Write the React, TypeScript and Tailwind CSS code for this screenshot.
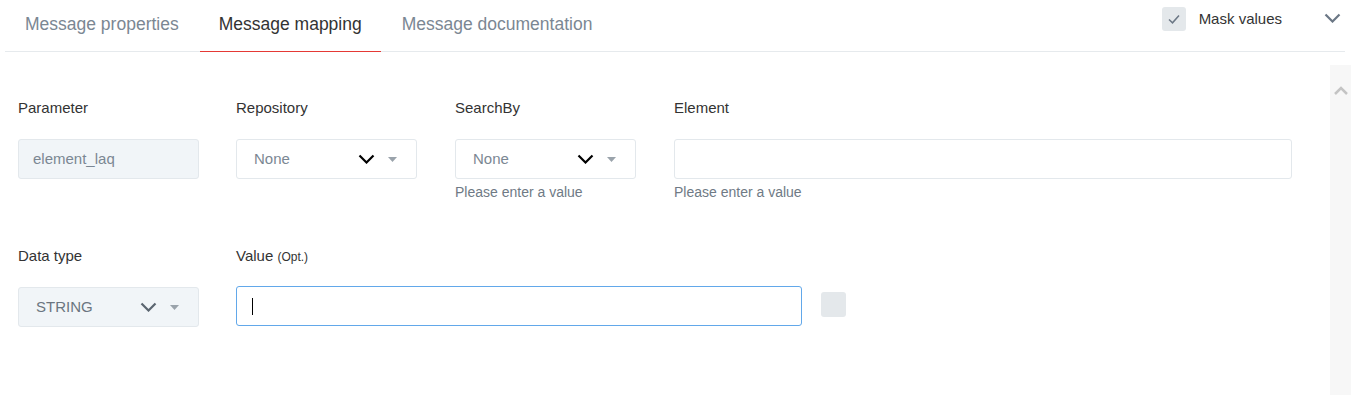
import React from 'react'

const tabs = ['Message properties', 'Message mapping', 'Message documentation']

function Caret() {
  return (
    <svg width="9" height="5" viewBox="0 0 9 5" className="text-[#9aa3ab]">
      <path d="M0 0h9L4.5 5z" fill="currentColor" />
    </svg>
  )
}

function Chevron({ className = '' }: { className?: string }) {
  return (
    <svg width="17" height="10" viewBox="0 0 17 10" className={className}>
      <path d="M1.5 1.5l7 7 7-7" fill="none" stroke="currentColor" strokeWidth="2.2" />
    </svg>
  )
}

function Select({ value, filled = false }: { value: string; filled?: boolean }) {
  return (
    <div
      className={`flex h-[40px] w-[181px] items-center rounded-[3px] border border-[#e3e8ec] pl-[17px] pr-[19px] ${
        filled ? 'bg-[#f1f5f8]' : 'bg-white'
      }`}
    >
      <span className={`flex-1 text-[15px] ${filled ? 'text-[#6b7580]' : 'text-[#7b8793]'}`}>{value}</span>
      <Chevron className={filled ? 'text-[#5b6670]' : 'text-black'} />
      <span className="ml-[13px] flex items-center">
        <Caret />
      </span>
    </div>
  )
}

function Label({ children }: { children: React.ReactNode }) {
  return <div className="mb-[21px] h-[20px] text-[15px] leading-[20px] text-[#333]">{children}</div>
}

function Helper() {
  return <div className="mt-[5px] text-[14px] leading-[16px] text-[#6f7a85]">Please enter a value</div>
}

export default function App() {
  return (
    <div className="flex h-[395px] w-full flex-col bg-white font-['Liberation_Sans',Arial,sans-serif]">
      {/* header */}
      <div className="ml-[5px] flex w-[1340px] border-b border-[#e6eaed]">
        {tabs.map((t, i) => (
          <div
            key={t}
            className={`relative -mb-px flex h-[52px] items-center whitespace-nowrap px-[20px] pb-[3px] text-[17.5px] ${
              i === 1 ? 'text-[#333]' : 'text-[#7b8793]'
            }`}
          >
            {t}
            {i === 1 && <div className="absolute bottom-0 left-px right-px h-px bg-[#e53935]" />}
          </div>
        ))}
        <div className="ml-auto flex items-center self-start pt-[7px]">
          <div className="flex h-[24px] w-[24px] items-center justify-center rounded-[3px] bg-[#e4e8eb]">
            <svg width="12" height="10" viewBox="0 0 12 10">
              <path d="M1 5.5l3.5 3.3L11 1.5" fill="none" stroke="#6b7785" strokeWidth="1.5" />
            </svg>
          </div>
          <span className="ml-[13px] text-[15px] text-[#333]">Mask values</span>
          <Chevron className="ml-[42px] mb-[2px] mr-[4px] text-[#6b7785]" />
        </div>
      </div>

      {/* body */}
      <div className="flex flex-1">
        <div className="flex-1 pl-[18px] pt-[46px]">
          <div className="flex items-start">
            <div className="w-[218px]">
              <Label>Parameter</Label>
              <div className="flex h-[40px] w-[181px] items-center rounded-[3px] border border-[#e3e8ec] bg-[#f1f5f8] pl-[14px] text-[15px] text-[#7b8793]">
                element_laq
              </div>
            </div>
            <div className="w-[219px]">
              <Label>Repository</Label>
              <Select value="None" />
            </div>
            <div className="w-[219px]">
              <Label>SearchBy</Label>
              <Select value="None" />
              <Helper />
            </div>
            <div>
              <Label>Element</Label>
              <div className="h-[40px] w-[618px] rounded-[3px] border border-[#e3e8ec] bg-white" />
              <Helper />
            </div>
          </div>

          <div className="mt-[46px] flex items-start">
            <div className="w-[218px]">
              <Label>Data type</Label>
              <Select value="STRING" filled />
            </div>
            <div>
              <div className="mb-[20px] h-[20px] text-[15px] leading-[20px] text-[#333]">
                Value <span className="text-[12px]">(Opt.)</span>
              </div>
              <div className="flex items-center">
                <div className="flex h-[40px] w-[566px] items-center rounded-[3px] border border-[#62a8ea] bg-white pl-[15px]">
                  <div className="h-[17px] w-px bg-black" />
                </div>
                <div className="ml-[19px] mb-[3px] h-[25px] w-[25px] rounded-[3px] bg-[#e4e8eb]" />
              </div>
            </div>
          </div>
        </div>

        {/* scrollbar */}
        <div className="mr-[13px] mt-[13px] flex w-[21px] justify-center bg-[#f7f7f7] pt-[21px]">
          <svg width="14" height="9" viewBox="0 0 14 9">
            <path d="M1 8l6-6 6 6" fill="none" stroke="#c4c4c4" strokeWidth="2.5" />
          </svg>
        </div>
      </div>
    </div>
  )
}
